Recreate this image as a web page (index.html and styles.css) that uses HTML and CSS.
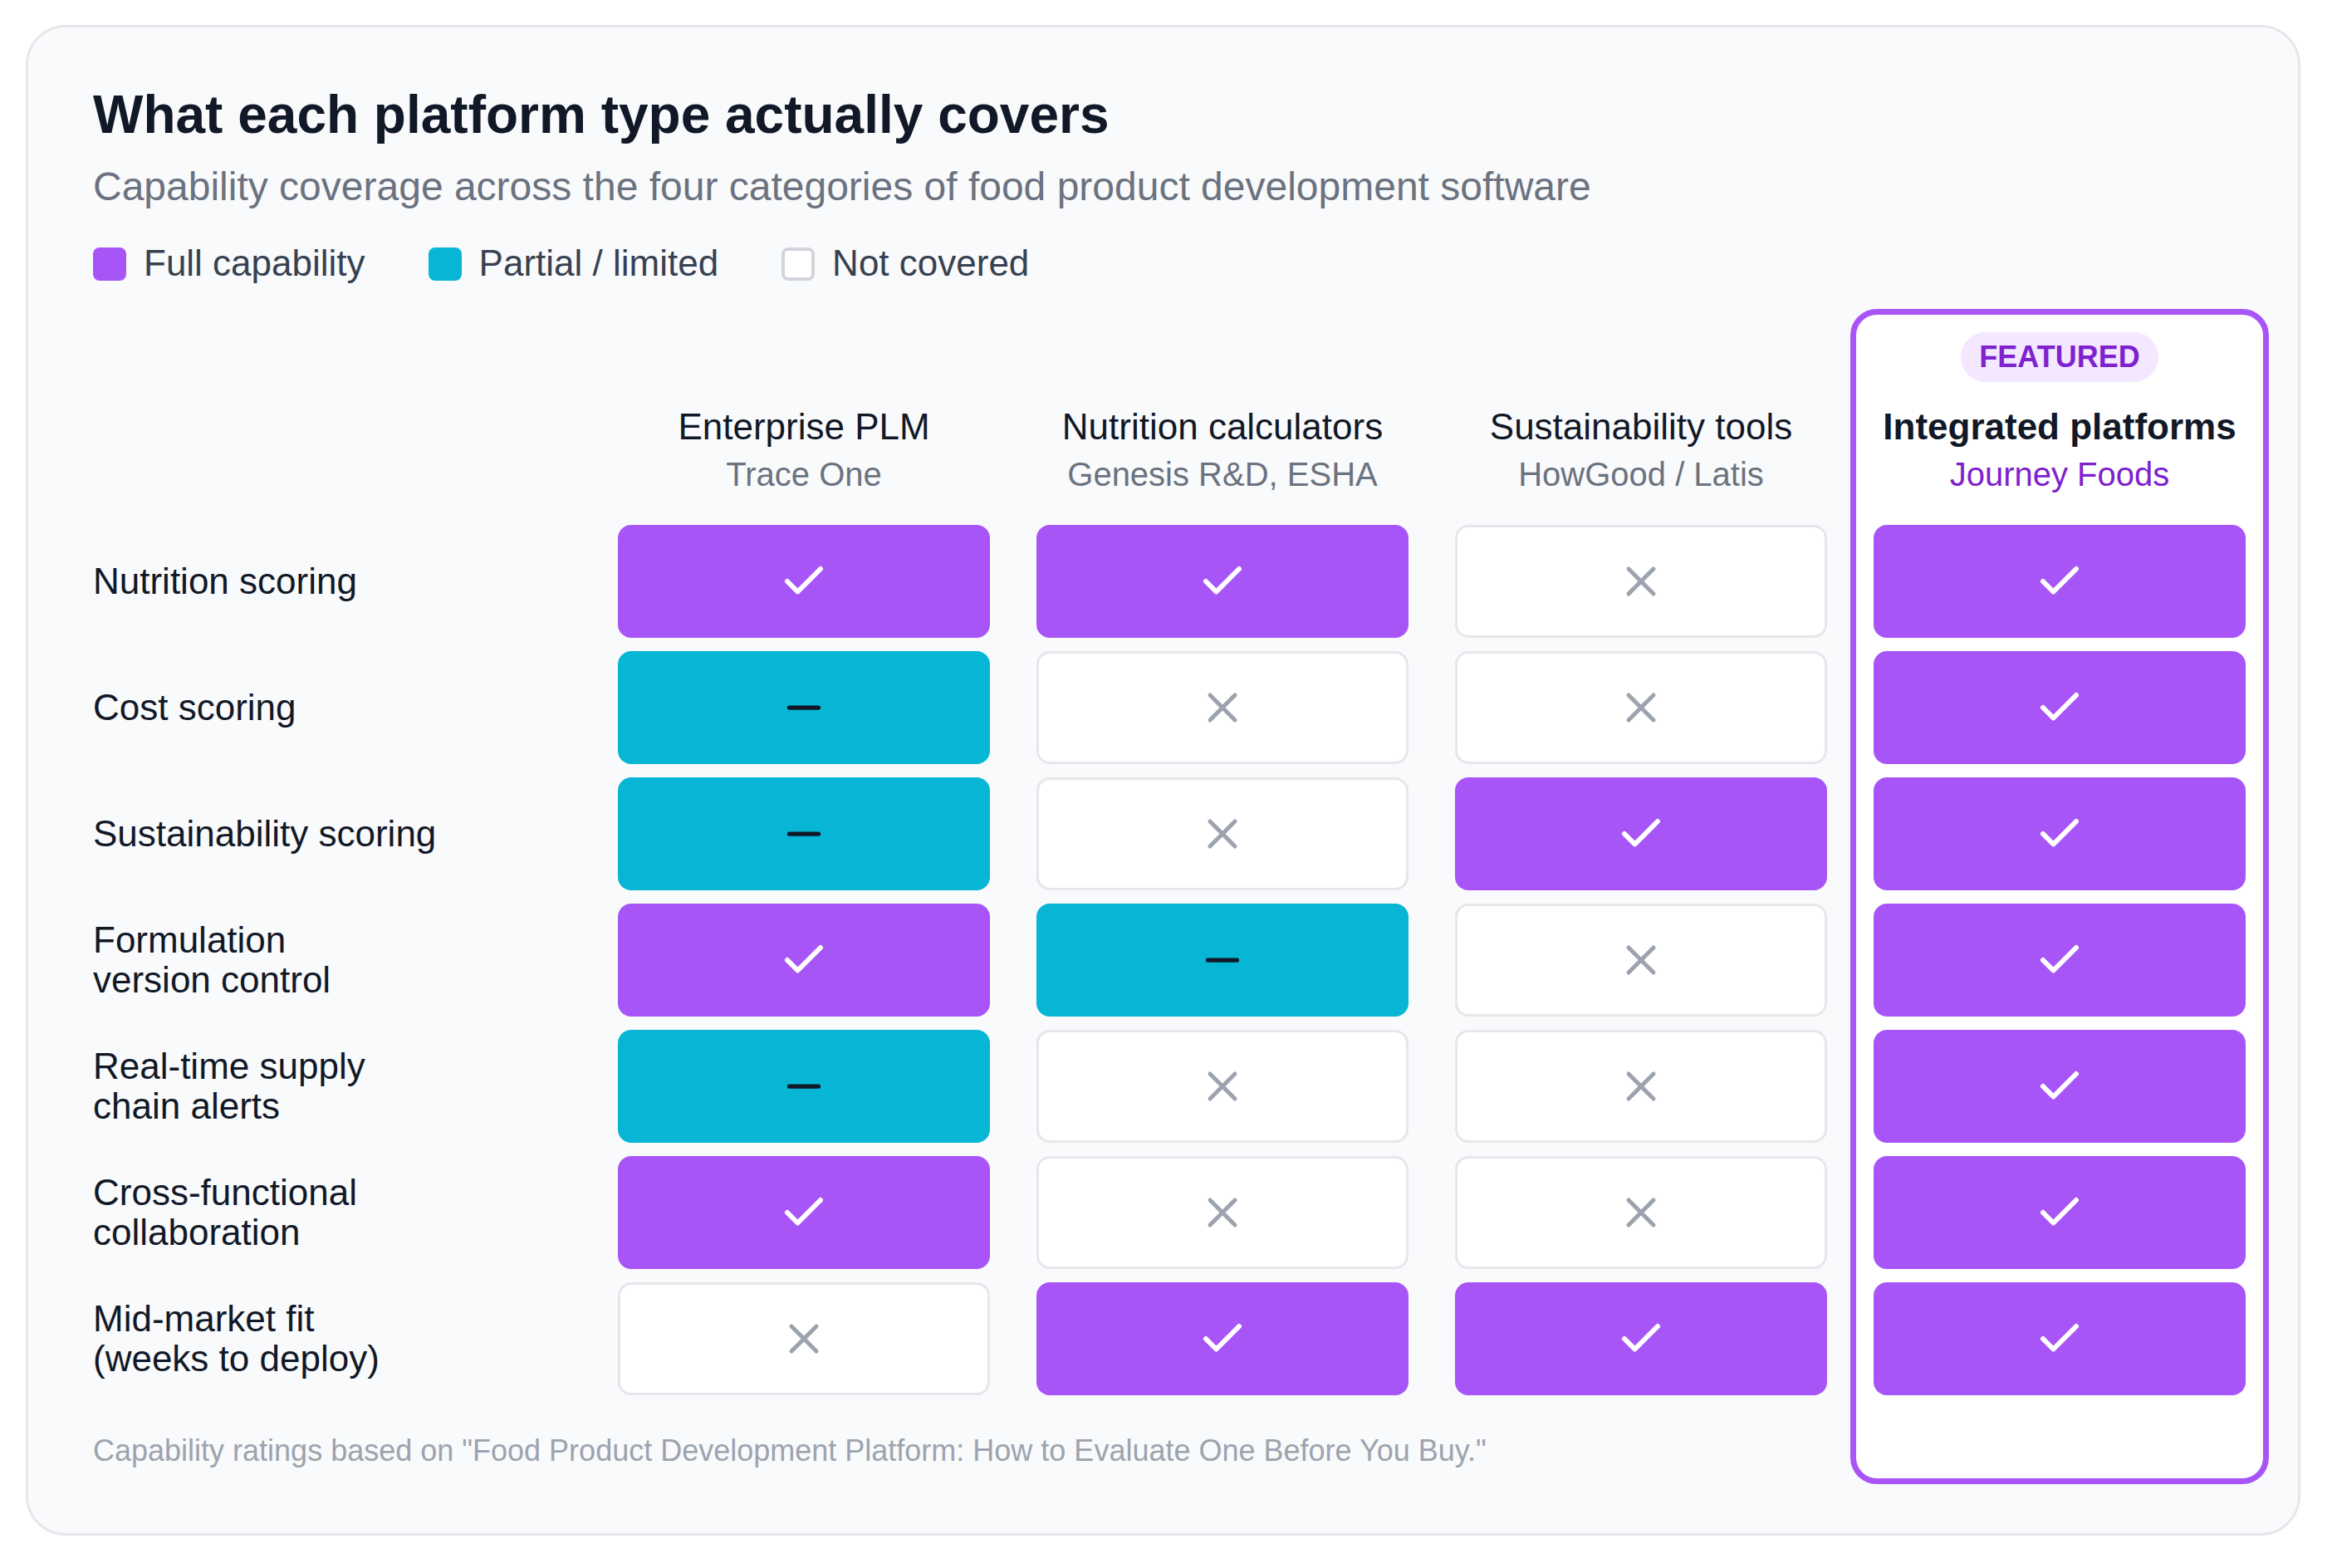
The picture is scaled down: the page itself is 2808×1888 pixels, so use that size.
FILE: index.html
```html
<!DOCTYPE html>
<html lang="en">
<head>
<meta charset="utf-8">
<title>What each platform type actually covers</title>
<link rel="stylesheet" href="styles.css">
</head>
<body>
<section class="card">
  <h1 class="title">What each platform type actually covers</h1>
  <p class="subtitle">Capability coverage across the four categories of food product development software</p>
  <div class="legend">
    <div class="legend-item"><span class="swatch swatch-full"></span>Full capability</div>
    <div class="legend-item"><span class="swatch swatch-partial"></span>Partial / limited</div>
    <div class="legend-item"><span class="swatch swatch-none"></span>Not covered</div>
  </div>

  <div class="matrix">
    <div class="featured-frame"></div>

    <div class="col-head c1"><div class="head-name">Enterprise PLM</div><div class="head-sub">Trace One</div></div>
    <div class="col-head c2"><div class="head-name">Nutrition calculators</div><div class="head-sub">Genesis R&amp;D, ESHA</div></div>
    <div class="col-head c3"><div class="head-name">Sustainability tools</div><div class="head-sub">HowGood / Latis</div></div>
    <div class="col-head c4 featured-head"><span class="badge">FEATURED</span><div class="head-name strong">Integrated platforms</div><div class="head-sub purple">Journey Foods</div></div>

    <div class="row-label r1">Nutrition scoring</div>
    <div class="cell full r1 c1"><svg viewBox="0 0 24 24" class="ico ico-check"><polyline points="20 6 9 17 4 12"/></svg></div>
    <div class="cell full r1 c2"><svg viewBox="0 0 24 24" class="ico ico-check"><polyline points="20 6 9 17 4 12"/></svg></div>
    <div class="cell none r1 c3"><svg viewBox="0 0 24 24" class="ico ico-x"><path d="M18 6 6 18M6 6l12 12"/></svg></div>
    <div class="cell full r1 c4"><svg viewBox="0 0 24 24" class="ico ico-check"><polyline points="20 6 9 17 4 12"/></svg></div>

    <div class="row-label r2">Cost scoring</div>
    <div class="cell partial r2 c1"><svg viewBox="0 0 24 24" class="ico ico-minus"><path d="M5 12h14"/></svg></div>
    <div class="cell none r2 c2"><svg viewBox="0 0 24 24" class="ico ico-x"><path d="M18 6 6 18M6 6l12 12"/></svg></div>
    <div class="cell none r2 c3"><svg viewBox="0 0 24 24" class="ico ico-x"><path d="M18 6 6 18M6 6l12 12"/></svg></div>
    <div class="cell full r2 c4"><svg viewBox="0 0 24 24" class="ico ico-check"><polyline points="20 6 9 17 4 12"/></svg></div>

    <div class="row-label r3">Sustainability scoring</div>
    <div class="cell partial r3 c1"><svg viewBox="0 0 24 24" class="ico ico-minus"><path d="M5 12h14"/></svg></div>
    <div class="cell none r3 c2"><svg viewBox="0 0 24 24" class="ico ico-x"><path d="M18 6 6 18M6 6l12 12"/></svg></div>
    <div class="cell full r3 c3"><svg viewBox="0 0 24 24" class="ico ico-check"><polyline points="20 6 9 17 4 12"/></svg></div>
    <div class="cell full r3 c4"><svg viewBox="0 0 24 24" class="ico ico-check"><polyline points="20 6 9 17 4 12"/></svg></div>

    <div class="row-label r4">Formulation<br>version control</div>
    <div class="cell full r4 c1"><svg viewBox="0 0 24 24" class="ico ico-check"><polyline points="20 6 9 17 4 12"/></svg></div>
    <div class="cell partial r4 c2"><svg viewBox="0 0 24 24" class="ico ico-minus"><path d="M5 12h14"/></svg></div>
    <div class="cell none r4 c3"><svg viewBox="0 0 24 24" class="ico ico-x"><path d="M18 6 6 18M6 6l12 12"/></svg></div>
    <div class="cell full r4 c4"><svg viewBox="0 0 24 24" class="ico ico-check"><polyline points="20 6 9 17 4 12"/></svg></div>

    <div class="row-label r5">Real-time supply<br>chain alerts</div>
    <div class="cell partial r5 c1"><svg viewBox="0 0 24 24" class="ico ico-minus"><path d="M5 12h14"/></svg></div>
    <div class="cell none r5 c2"><svg viewBox="0 0 24 24" class="ico ico-x"><path d="M18 6 6 18M6 6l12 12"/></svg></div>
    <div class="cell none r5 c3"><svg viewBox="0 0 24 24" class="ico ico-x"><path d="M18 6 6 18M6 6l12 12"/></svg></div>
    <div class="cell full r5 c4"><svg viewBox="0 0 24 24" class="ico ico-check"><polyline points="20 6 9 17 4 12"/></svg></div>

    <div class="row-label r6">Cross-functional<br>collaboration</div>
    <div class="cell full r6 c1"><svg viewBox="0 0 24 24" class="ico ico-check"><polyline points="20 6 9 17 4 12"/></svg></div>
    <div class="cell none r6 c2"><svg viewBox="0 0 24 24" class="ico ico-x"><path d="M18 6 6 18M6 6l12 12"/></svg></div>
    <div class="cell none r6 c3"><svg viewBox="0 0 24 24" class="ico ico-x"><path d="M18 6 6 18M6 6l12 12"/></svg></div>
    <div class="cell full r6 c4"><svg viewBox="0 0 24 24" class="ico ico-check"><polyline points="20 6 9 17 4 12"/></svg></div>

    <div class="row-label r7">Mid-market fit<br>(weeks to deploy)</div>
    <div class="cell none r7 c1"><svg viewBox="0 0 24 24" class="ico ico-x"><path d="M18 6 6 18M6 6l12 12"/></svg></div>
    <div class="cell full r7 c2"><svg viewBox="0 0 24 24" class="ico ico-check"><polyline points="20 6 9 17 4 12"/></svg></div>
    <div class="cell full r7 c3"><svg viewBox="0 0 24 24" class="ico ico-check"><polyline points="20 6 9 17 4 12"/></svg></div>
    <div class="cell full r7 c4"><svg viewBox="0 0 24 24" class="ico ico-check"><polyline points="20 6 9 17 4 12"/></svg></div>

    <p class="footnote">Capability ratings based on "Food Product Development Platform: How to Evaluate One Before You Buy."</p>
  </div>
</section>
</body>
</html>
```
FILE: styles.css
```css
* { box-sizing: border-box; }

html, body {
  margin: 0;
  padding: 0;
  background: #ffffff;
}

body {
  font-family: "Liberation Sans", Arial, Helvetica, sans-serif;
  color: #111827;
}

.card {
  margin: 30px 0 0 31px;
  width: 2739px;
  background: #f9fafb;
  border: 3px solid #e5e7eb;
  border-radius: 48px;
  padding: 67px 34px 59px 78px;
}

.title {
  margin: 0;
  font-size: 64px;
  line-height: 1.2;
  font-weight: 700;
  color: #111827;
}

.subtitle {
  margin: 19px 0 0;
  font-size: 48px;
  line-height: 1.2;
  color: #6b7280;
}

.legend {
  margin-top: 38px;
  display: flex;
  align-items: center;
  gap: 76px;
  height: 53px;
}

.legend-item {
  display: flex;
  align-items: center;
  gap: 21px;
  font-size: 44px;
  line-height: 1.2;
  color: #374151;
}

.swatch {
  width: 40px;
  height: 40px;
  border-radius: 8px;
  flex: none;
}
.swatch-full { background: #a855f7; }
.swatch-partial { background: #06b6d4; }
.swatch-none { background: #ffffff; border: 4px solid #d1d5db; }

.matrix {
  margin-top: 28px;
  display: grid;
  grid-template-columns: 604px repeat(4, 504px);
  grid-template-rows: auto repeat(7, 136px) auto;
  row-gap: 16px;
}

.featured-frame {
  grid-column: 5;
  grid-row: 1 / span 9;
  background: #ffffff;
  border: 7px solid #a855f7;
  border-radius: 32px;
}

.col-head {
  grid-row: 1;
  display: flex;
  flex-direction: column;
  justify-content: flex-end;
  align-items: center;
  padding: 28px 0 21px;
  text-align: center;
}
.c1 { grid-column: 2; }
.c2 { grid-column: 3; }
.c3 { grid-column: 4; }
.c4 { grid-column: 5; }

.r1 { grid-row: 2; }
.r2 { grid-row: 3; }
.r3 { grid-row: 4; }
.r4 { grid-row: 5; }
.r5 { grid-row: 6; }
.r6 { grid-row: 7; }
.r7 { grid-row: 8; }

.badge {
  height: 60px;
  padding: 0 22px;
  display: flex;
  align-items: center;
  border-radius: 30px;
  background: #f3e8ff;
  color: #7e22ce;
  font-size: 36px;
  font-weight: 700;
  margin-bottom: 28px;
}

.head-name {
  font-size: 44px;
  line-height: 1.2;
  color: #111827;
  margin-bottom: 6px;
  white-space: nowrap;
}
.head-name.strong { font-weight: 700; }

.head-sub {
  font-size: 40px;
  line-height: 1.2;
  color: #6b7280;
  white-space: nowrap;
}
.head-sub.purple { color: #7e22ce; }

.row-label {
  grid-column: 1;
  display: flex;
  align-items: center;
  font-size: 44px;
  line-height: 48px;
  color: #111827;
}

.cell {
  margin: 0 28px;
  border-radius: 16px;
  display: flex;
  align-items: center;
  justify-content: center;
}
.cell.full { background: #a855f7; }
.cell.partial { background: #06b6d4; }
.cell.none { background: #ffffff; border: 3px solid #e5e7eb; }

.ico {
  width: 60px;
  height: 60px;
  fill: none;
  stroke-linecap: round;
  stroke-linejoin: round;
}
.ico-check { stroke: #ffffff; stroke-width: 2.4; }
.ico-minus { stroke: #111827; stroke-width: 2.1; }
.ico-x { stroke: #9ca3af; stroke-width: 2; }

.footnote {
  grid-column: 1 / 5;
  grid-row: 9;
  margin: 0;
  padding: 29px 0 19px;
  font-size: 36px;
  line-height: 1.2;
  color: #9ca3af;
  white-space: nowrap;
}
```
